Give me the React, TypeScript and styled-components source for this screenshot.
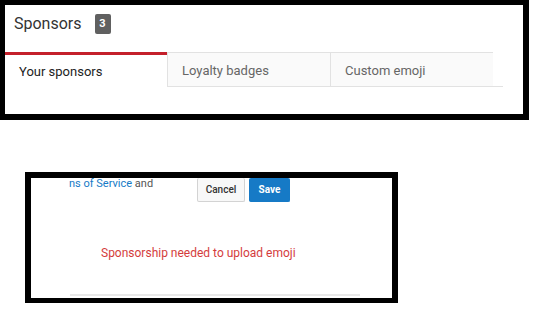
import styled, { createGlobalStyle } from 'styled-components'

const GlobalStyle = createGlobalStyle`
  html, body {
    margin: 0;
    padding: 0;
    background: #ffffff;
  }
  * {
    box-sizing: border-box;
  }
  body {
    font-family: Roboto, "Liberation Sans", Arial, sans-serif;
  }
`;

const Page = styled.div`
  display: flex;
  flex-direction: column;
  align-items: flex-start;
`;

const SponsorsPanel = styled.section`
  width: 529px;
  height: 120px;
  border-style: solid;
  border-color: #000;
  border-width: 5px 6px 6px 5px;
  display: flex;
  flex-direction: column;
`;

const Header = styled.div`
  display: flex;
  align-items: center;
  height: 19px;
  margin-top: 9px;
  padding-left: 9px;
`;

const Title = styled.h2`
  margin: 0;
  font-size: 16px;
  line-height: 19px;
  font-weight: 400;
  color: #333;
`;

const CountBadge = styled.span`
  margin-left: 13px;
  width: 16px;
  height: 20px;
  border-radius: 2px;
  background: #606060;
  color: #fff;
  font-size: 11px;
  font-weight: 700;
  display: flex;
  align-items: center;
  justify-content: center;
`;

const TabList = styled.div`
  display: flex;
  margin-top: 19px;
  height: 35px;
`;

const Tab = styled.div<{ $active?: boolean }>`
  width: ${p => (p.$active ? '162px' : '163px')};
  height: 35px;
  display: flex;
  align-items: center;
  padding-left: 14px;
  padding-top: ${p => (p.$active ? '0' : '2px')};
  font-size: 13px;
  color: ${p => (p.$active ? '#222' : '#666')};
  background: ${p => (p.$active ? '#fff' : '#fafafa')};
  border-top: ${p => (p.$active ? '3px solid #c4202b' : '1px solid #e2e2e2')};
  border-bottom: ${p => (p.$active ? 'none' : '1px solid #e2e2e2')};
  border-left: ${p => (p.$active ? 'none' : '1px solid #e2e2e2')};
  &:last-of-type {
    border-right: 1px solid #e2e2e2;
  }
`;

const TabRule = styled.div`
  width: 10px;
  align-self: flex-end;
  border-bottom: 1px solid #e2e2e2;
`;

const EmojiPanel = styled.section`
  margin-top: 52px;
  margin-left: 25px;
  width: 373px;
  height: 131px;
  border-style: solid;
  border-color: #000;
  border-width: 6px 6px 5px 6px;
  overflow: hidden;
  padding-left: 38px;
  display: flex;
  flex-direction: column;
  align-items: flex-start;
`;

const TopRow = styled.div`
  display: flex;
  align-items: flex-start;
  height: 24px;
`;

const TermsText = styled.div`
  width: 128px;
  font-size: 11px;
  line-height: 12px;
  color: #555;
  white-space: nowrap;
  a {
    color: #167ac6;
    text-decoration: none;
  }
`;

const ButtonGroup = styled.div`
  display: flex;
  gap: 4px;
`;

const Button = styled.button<{ $primary?: boolean }>`
  width: ${p => (p.$primary ? '41px' : '48px')};
  height: 24px;
  padding: 0;
  margin: 0;
  font-family: Roboto, "Liberation Sans", Arial, sans-serif;
  font-size: 10px;
  font-weight: ${p => (p.$primary ? 700 : 500)};
  border-radius: 2px;
  border: 1px solid ${p => (p.$primary ? '#167ac6' : '#d3d3d3')};
  border-top: none;
  background: ${p => (p.$primary ? '#167ac6' : '#f8f8f8')};
  color: ${p => (p.$primary ? '#fff' : '#333')};
  cursor: pointer;
`;

const Notice = styled.div`
  margin-top: 43px;
  margin-left: 32px;
  font-size: 12px;
  line-height: 16px;
  color: #d43c3c;
`;

const Divider = styled.div`
  margin-top: 33px;
  margin-left: 1px;
  width: 290px;
  height: 2px;
  background: #e8e8e8;
`;

const App = () => {
  return (
    <Page>
      <GlobalStyle />
      <SponsorsPanel>
        <Header>
          <Title>Sponsors</Title>
          <CountBadge>3</CountBadge>
        </Header>
        <TabList>
          <Tab $active>Your sponsors</Tab>
          <Tab>Loyalty badges</Tab>
          <Tab>Custom emoji</Tab>
          <TabRule />
        </TabList>
      </SponsorsPanel>
      <EmojiPanel>
        <TopRow>
          <TermsText>
            <a href="#">ns of Service</a> and
          </TermsText>
          <ButtonGroup>
            <Button>Cancel</Button>
            <Button $primary>Save</Button>
          </ButtonGroup>
        </TopRow>
        <Notice>Sponsorship needed to upload emoji</Notice>
        <Divider />
      </EmojiPanel>
    </Page>
  );
};

export default App;
